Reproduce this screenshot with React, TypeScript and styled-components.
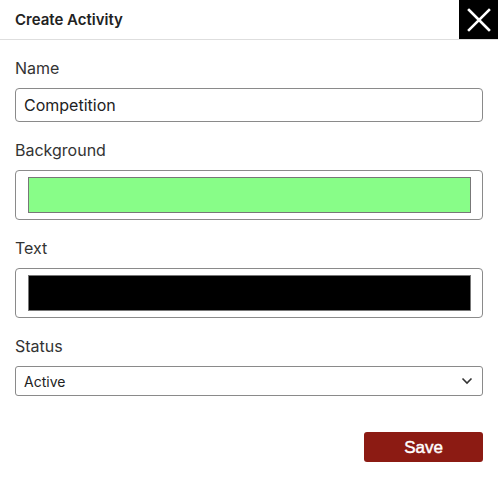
import React from "react";
import styled, { createGlobalStyle } from "styled-components";

const Global = createGlobalStyle`
  html, body { margin: 0; padding: 0; background: #fff; }
  body { font-family: Inter, "Noto Sans", sans-serif; color: #222; }
  * { box-sizing: border-box; }
`;

const Modal = styled.div`
  width: 498px;
  height: 478px;
  background: #fff;
  display: flex;
  flex-direction: column;
`;

const Header = styled.div`
  height: 40px;
  display: flex;
  align-items: center;
  justify-content: space-between;
  border-bottom: 1px solid #dedede;
  padding-left: 15px;
`;

const Title = styled.h1`
  margin: 0;
  font-size: 15px;
  font-weight: 600;
  color: #222;
`;

const CloseButton = styled.button`
  width: 39px;
  height: 39px;
  align-self: flex-start;
  background: #000;
  border: none;
  padding: 0;
  display: flex;
  align-items: center;
  justify-content: center;
  cursor: pointer;
`;

const Body = styled.div`
  padding: 18px 15px 0;
  display: flex;
  flex-direction: column;
  gap: 18px;
`;

const Field = styled.div`
  display: flex;
  flex-direction: column;
  gap: 10px;
`;

const Label = styled.label`
  font-size: 16px;
  line-height: 20px;
  color: #333;
`;

const TextInput = styled.div`
  height: 34px;
  border: 1px solid #8a8a8a;
  border-radius: 4px;
  padding: 0 8px;
  display: flex;
  align-items: center;
  font-size: 16px;
  color: #222;
`;

const ColorBox = styled.div`
  height: 50px;
  border: 1px solid #8a8a8a;
  border-radius: 4px;
  padding: 6px 11px 6px 12px;
  display: flex;
`;

const Swatch = styled.div<{ $color: string }>`
  flex: 1;
  background: ${(p) => p.$color};
  border: 1px solid #777;
`;

const Select = styled.div`
  height: 30px;
  border: 1px solid #8a8a8a;
  border-radius: 3px;
  padding: 0 9px 0 8px;
  display: flex;
  align-items: center;
  justify-content: space-between;
  font-size: 14px;
  color: #222;
`;

const Footer = styled.div`
  display: flex;
  justify-content: flex-end;
  padding: 36px 15px 0;
`;

const SaveButton = styled.button`
  width: 119px;
  height: 30px;
  background: #8c1b13;
  color: #fff;
  border: none;
  border-radius: 3px;
  font-family: "Liberation Sans", Arial, sans-serif;
  font-size: 17px;
  font-weight: 400;
  -webkit-text-stroke: 0.45px #fff;
  line-height: 31px;
  padding: 0;
  cursor: pointer;
`;

export default function App() {
  return (
    <>
      <Global />
      <Modal>
        <Header>
          <Title>Create Activity</Title>
          <CloseButton aria-label="Close">
            <svg width="24" height="24" viewBox="0 0 24 24">
              <path d="M2 2 L22 22 M22 2 L2 22" stroke="#fff" strokeWidth="2.6" strokeLinecap="square" />
            </svg>
          </CloseButton>
        </Header>
        <Body>
          <Field>
            <Label>Name</Label>
            <TextInput>Competition</TextInput>
          </Field>
          <Field>
            <Label>Background</Label>
            <ColorBox>
              <Swatch $color="#88fd88" />
            </ColorBox>
          </Field>
          <Field>
            <Label>Text</Label>
            <ColorBox>
              <Swatch $color="#000" />
            </ColorBox>
          </Field>
          <Field>
            <Label>Status</Label>
            <Select>
              <span>Active</span>
              <svg width="12" height="8" viewBox="0 0 12 8">
                <path d="M1.5 1.5 L6 6 L10.5 1.5" fill="none" stroke="#333" strokeWidth="1.6" />
              </svg>
            </Select>
          </Field>
        </Body>
        <Footer>
          <SaveButton>Save</SaveButton>
        </Footer>
      </Modal>
    </>
  );
}
